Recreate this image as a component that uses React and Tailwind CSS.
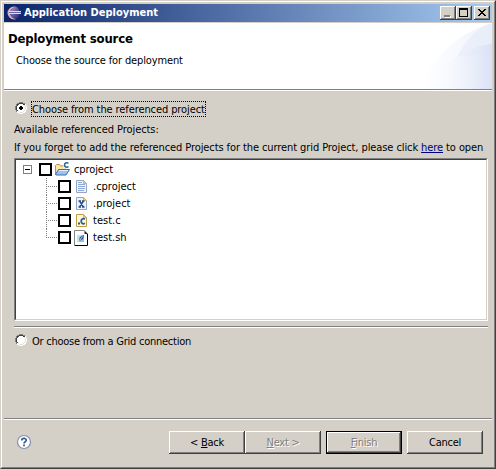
import React from "react";

const raised =
  "bg-[#d4d0c8] shadow-[inset_-1px_-1px_0_#404040,inset_1px_1px_0_#fff,inset_-2px_-2px_0_#808080]";

function Radio({ checked }) {
  return (
    <svg width="12" height="12" viewBox="0 0 12 12" className="block shrink-0" shapeRendering="crispEdges">
      <path d="M4 1h4v1h2v2h1v4h-1v2H8v1H4v-1H2V8H1V4h1V2h2z" fill="#fff" />
      <path d="M4 0h4v1H4zM2 1h2v1H2zM8 1h2v1H8zM1 2h1v2H1zM0 4h1v4H0zM1 8h1v2H1z" fill="#808080" />
      <path d="M4 1h4v1H4zM2 2h2v1H2zM8 2h2v1H8zM2 3h1v1H2zM1 4h1v4H1zM2 8h1v1H2z" fill="#404040" />
      <path d="M9 3h1v1h1v4h-1v1H9v1H8v1H4v-1H3V9h1v1h4V9h1V8h1V4H9z" fill="#e4e1dc" />
      <path d="M10 2h1v2h-1zM11 4h1v4h-1zM10 8h1v2h-1zM8 10h2v1H8zM4 11h4v1H4zM2 10h2v1H2z" fill="#fff" />
      {checked && <path d="M5 4h2v1h1v2H7v1H5V7H4V5h1z" fill="#000" />}
    </svg>
  );
}

function EclipseLogo() {
  return (
    <svg width="16" height="16" viewBox="0 0 16 16" className="block shrink-0">
      <defs>
        <linearGradient id="ball" x1="0" y1="0" x2="1" y2="1">
          <stop offset="0" stopColor="#b99bc4" />
          <stop offset="0.45" stopColor="#6d5a9a" />
          <stop offset="1" stopColor="#1a2566" />
        </linearGradient>
      </defs>
      <path d="M8 1.500a6.500 6.500 0 0 0 0 13l2-.3C6 13 4 10.500 4 8S6 3 10 1.800z" fill="#d3aebc" />
      <path d="M10 1.800a6.300 6.300 0 0 0 0 12.400 6.300 6.300 0 0 0 3.500-6.200A6.300 6.300 0 0 0 10 1.800z" fill="url(#ball)" />
      <path d="M3 6.500h12M3 8.500h12" stroke="#d9ddf2" strokeWidth="1" />
      <path d="M3 7.500h12" stroke="#5a66a8" strokeWidth="1" />
    </svg>
  );
}

function FolderIcon() {
  return (
    <svg width="16" height="16" viewBox="0 0 16 16" className="block shrink-0">
      <path d="M1.500 12.500v-9l1-1h3l1 1.500h5v4" fill="#fbe7ad" stroke="#c58f32" />
      <path d="M1.500 12.500l3-5h11l-3.500 5.500H2z" fill="#9dc2f0" stroke="#3b6cb3" />
      <path d="M5 8.500h9" stroke="#e3f0ff" />
      <path d="M14.500 1.400C12.500.2 10.500 1 10.500 3s2 2.800 4 1.600" fill="none" stroke="#fff" strokeWidth="3" />
      <path d="M14.500 1.400C12.500.2 10.500 1 10.500 3s2 2.800 4 1.600" fill="none" stroke="#276a99" strokeWidth="1.600" />
    </svg>
  );
}

function FileIcon({ kind }) {
  if (kind === "sh") {
    return (
      <svg width="16" height="16" viewBox="0 0 16 16" className="block shrink-0">
        <path d="M.5.5h10l3 3v12H.5z" fill="#fff" />
        <path d="M.5 15V.5h10" fill="none" stroke="#848484" />
        <path d="M13.500 4v11.500H.5" fill="none" stroke="#000" />
        <path d="M10.500.5v3.500h3.500z" fill="#222" />
        <rect x="3" y="5" width="7" height="7" fill="#8fc4dd" />
        <path d="M3 5h5v2H5v5H3z" fill="#bce4ef" />
        <path d="M5 11l1-4 4-2-1 4z" fill="#234d91" />
        <path d="M5.500 10.500l3-4" stroke="#fff" strokeWidth=".8" />
      </svg>
    );
  }
  const gold = kind === "c";
  return (
    <svg width="16" height="16" viewBox="0 0 16 16" className="block shrink-0">
      <path
        d="M2.500 1.500h7l3 3v9h-10z"
        fill={gold ? "#fdf6df" : "#edf3fd"}
        stroke={gold ? "#c59a3e" : "#97a5c4"}
      />
      <path d="M9.500 1.500v3h3z" fill="#f1d48e" stroke="#d0a655" strokeWidth=".8" />
      {kind === "text" && <path d="M4 3.500h4M4 5.500h7M4 7.500h7M4 9.500h7M4 11.500h6" stroke="#8daadb" />}
      {kind === "x" && <path d="M5.500 5l4 6M9.500 5l-4 6M4.500 5h2.500M8 5h2.500M4.500 11h2.500M8 11h2.500" stroke="#294e86" strokeWidth="1.400" />}
      {kind === "c" && (
        <>
          <path d="M10.900 6.200C8.900 5 7.200 6.200 7.200 8.300s1.700 3.200 3.700 2" fill="none" stroke="#21608f" strokeWidth="1.800" />
          <path d="M4 9.500h2v2H4z" fill="#21608f" />
        </>
      )}
    </svg>
  );
}

function CheckBox() {
  return <span className="size-[13px] shrink-0 border-2 border-black bg-white" />;
}

const files = [
  { name: ".cproject", kind: "text" },
  { name: ".project", kind: "x" },
  { name: "test.c", kind: "c" },
  { name: "test.sh", kind: "sh" },
];

function Tree() {
  return (
    <div className="h-[163px] w-[474px] shrink-0 border border-b-white border-l-[#808080] border-r-white border-t-[#808080]">
      <div className="h-full border border-b-[#d4d0c8] border-l-[#404040] border-r-[#d4d0c8] border-t-[#404040] bg-white pl-[7px] pt-[1px]">
        <div className="flex h-[17px] items-center">
          <svg width="9" height="9" className="mr-[7px] block" shapeRendering="crispEdges">
            <rect x=".5" y=".5" width="8" height="8" fill="#fff" stroke="#808080" />
            <path d="M2 4.500h5" stroke="#000" />
          </svg>
          <CheckBox />
          <span className="ml-[2px]"><FolderIcon /></span>
          <span className="ml-[4px] tracking-[-0.1px]">cproject</span>
        </div>
        {files.map((f, i) => (
          <div key={f.name} className="flex h-[17px] items-center pl-[23px]">
            <svg width="12" height="17" className="block" shapeRendering="crispEdges">
              <path
                d={i === files.length - 1 ? "M.5 0v9M0 8.500h12" : "M.5 0v17M0 8.500h12"}
                stroke="#808080"
                strokeDasharray="1 1"
              />
            </svg>
            <CheckBox />
            <span className="ml-[3px]"><FileIcon kind={f.kind} /></span>
            <span className="ml-[3px]">{f.name}</span>
          </div>
        ))}
      </div>
    </div>
  );
}

function Button({ children, disabled, primary, className }) {
  return (
    <button
      className={
        "flex h-[23px] w-[76px] items-center justify-center tracking-[-0.25px] " +
        (primary
          ? "border border-black bg-[#d4d0c8] shadow-[inset_-1px_-1px_0_#404040,inset_1px_1px_0_#fff,inset_-2px_-2px_0_#808080] "
          : raised + " ") +
        (disabled ? "text-[#808080] [text-shadow:1px_1px_0_#fff] " : "") +
        className
      }
    >
      {children}
    </button>
  );
}

export default function App() {
  return (
    <div className="h-[469px] w-[496px] overflow-hidden border border-b-[#404040] border-l-[#d4d0c8] border-r-[#404040] border-t-[#d4d0c8] whitespace-nowrap font-['DejaVu_Sans_Condensed','DejaVu_Sans',sans-serif] text-[11px] leading-[14px] text-black">
      <div className="flex h-full flex-col border border-b-[#808080] border-l-white border-r-[#808080] border-t-white bg-[#d4d0c8] p-[2px] pb-0 pr-[1px]">
        <header className="flex h-[18px] w-[488px] shrink-0 items-center bg-linear-to-r/srgb from-[#0a246a] to-[#a6caf0] pl-[2px] pr-[2px] text-white">
          <EclipseLogo />
          <h1 className="ml-[2px] flex-1 text-[11px] font-bold">Application Deployment</h1>
          <div className="flex">
            <span className={raised + " h-[14px] w-[16px]"}>
              <svg width="16" height="14" shapeRendering="crispEdges"><path d="M5 10h6v2H5z" fill="#fff" /><path d="M4 9h6v2H4z" fill="#808080" /></svg>
            </span>
            <span className={raised + " h-[14px] w-[16px]"}>
              <svg width="16" height="14" shapeRendering="crispEdges"><path d="M3 2h9v9H3zM4 4v6h7V4z" fill="#000" fillRule="evenodd" /></svg>
            </span>
            <span className={raised + " ml-[2px] h-[14px] w-[16px]"}>
              <svg width="16" height="14" shapeRendering="crispEdges"><path d="M4 3h2v1h1v1h2V4h1V3h2v1h-1v1h-1v1H9v1h1v1h1v1h1v1h-2V9H9V8H7v1H6v1H4V9h1V8h1V7h1V6H6V5H5V4H4z" fill="#000" /></svg>
            </span>
          </div>
        </header>

        <section className="relative mt-[1px] h-[66px] w-[488px] shrink-0 bg-white">
          <svg width="75" height="66" viewBox="0 0 75 66" className="absolute right-0 top-0">
            <defs>
              <linearGradient id="arcA" x1="0" x2="1"><stop offset="0" stopColor="#fff" /><stop offset=".5" stopColor="#f7f9fd" /><stop offset="1" stopColor="#edf2fb" /></linearGradient>
              <linearGradient id="arcB" x1="0" x2="1"><stop offset=".1" stopColor="#fff" stopOpacity="0" /><stop offset="1" stopColor="#dae1f6" /></linearGradient>
            </defs>
            <path d="M4 66C10 50 26 14 75 0V66z" fill="url(#arcA)" />
            <path d="M75 0C58 6 48 18 40 34L75 30z" fill="#e4ebf9" opacity=".6" />
            <path d="M4 66C20 46 46 24 75 21V66z" fill="url(#arcB)" />
          </svg>
          <div className="relative pl-[4px] pt-[7px]">
            <h2 className="text-[13px] font-bold leading-[17px] tracking-[-0.18px]">Deployment source</h2>
            <p className="ml-[8px] mt-[7px] tracking-[-0.13px]">Choose the source for deployment</p>
          </div>
        </section>
        <div className="h-[2px] w-[488px] shrink-0 border-b border-t border-b-white border-t-[#808080]" />

        <main className="flex h-[327px] shrink-0 flex-col pl-[10px] pt-[10px]">
          <label className="flex h-[16px] items-center">
            <span className="mb-[2px] ml-[1px]"><Radio checked /></span>
            <span className="ml-[4px] flex h-[16px] w-[175px] items-center border border-dotted border-black pt-[2px] tracking-[-0.1px]">Choose from the referenced project</span>
          </label>
          <p className="mt-[6px] tracking-[-0.07px]">Available referenced Projects:</p>
          <p className="mb-[3px] mt-[4px] tracking-[-0.09px]">
            If you forget to add the referenced Projects for the current grid Project, please click{" "}
            <a className="text-[#000080] underline">here</a> to open
          </p>
          <Tree />
          <div className="mt-[5px] h-[2px] w-[474px] shrink-0 border-b border-t border-b-white border-t-[#808080]" />
          <label className="mt-[5px] flex h-[16px] items-center">
            <span className="mb-[2px] ml-[1px]"><Radio /></span>
            <span className="ml-[5px] pt-[2px] tracking-[-0.25px]">Or choose from a Grid connection</span>
          </label>
        </main>

        <footer className="flex w-[488px] flex-1 items-start border-t border-t-[#808080] shadow-[inset_0_1px_0_#fff]">
          <svg width="16" height="16" viewBox="0 0 16 16" className="ml-[12px] mt-[15px] block">
            <circle cx="8" cy="8" r="6.500" fill="#fff" stroke="#8291b0" strokeWidth="1.200" />
            <path d="M5.700 6.500C5.700 3.700 10.300 3.700 10.300 6.300C10.300 7.700 8 7.800 8 9.500" fill="none" stroke="#3a5a92" strokeWidth="1.700" />
            <path d="M7.100 10.500h1.800v1.700H7.100z" fill="#3a5a92" />
          </svg>
          <Button className="ml-[137px] mt-[12px]"><span>&lt; <u>B</u>ack</span></Button>
          <Button disabled className="mt-[12px]"><span><u>N</u>ext &gt;</span></Button>
          <Button disabled primary className="ml-[5px] mt-[12px]"><span><u>F</u>inish</span></Button>
          <Button className="ml-[5px] mt-[12px]">Cancel</Button>
        </footer>
      </div>
    </div>
  );
}
